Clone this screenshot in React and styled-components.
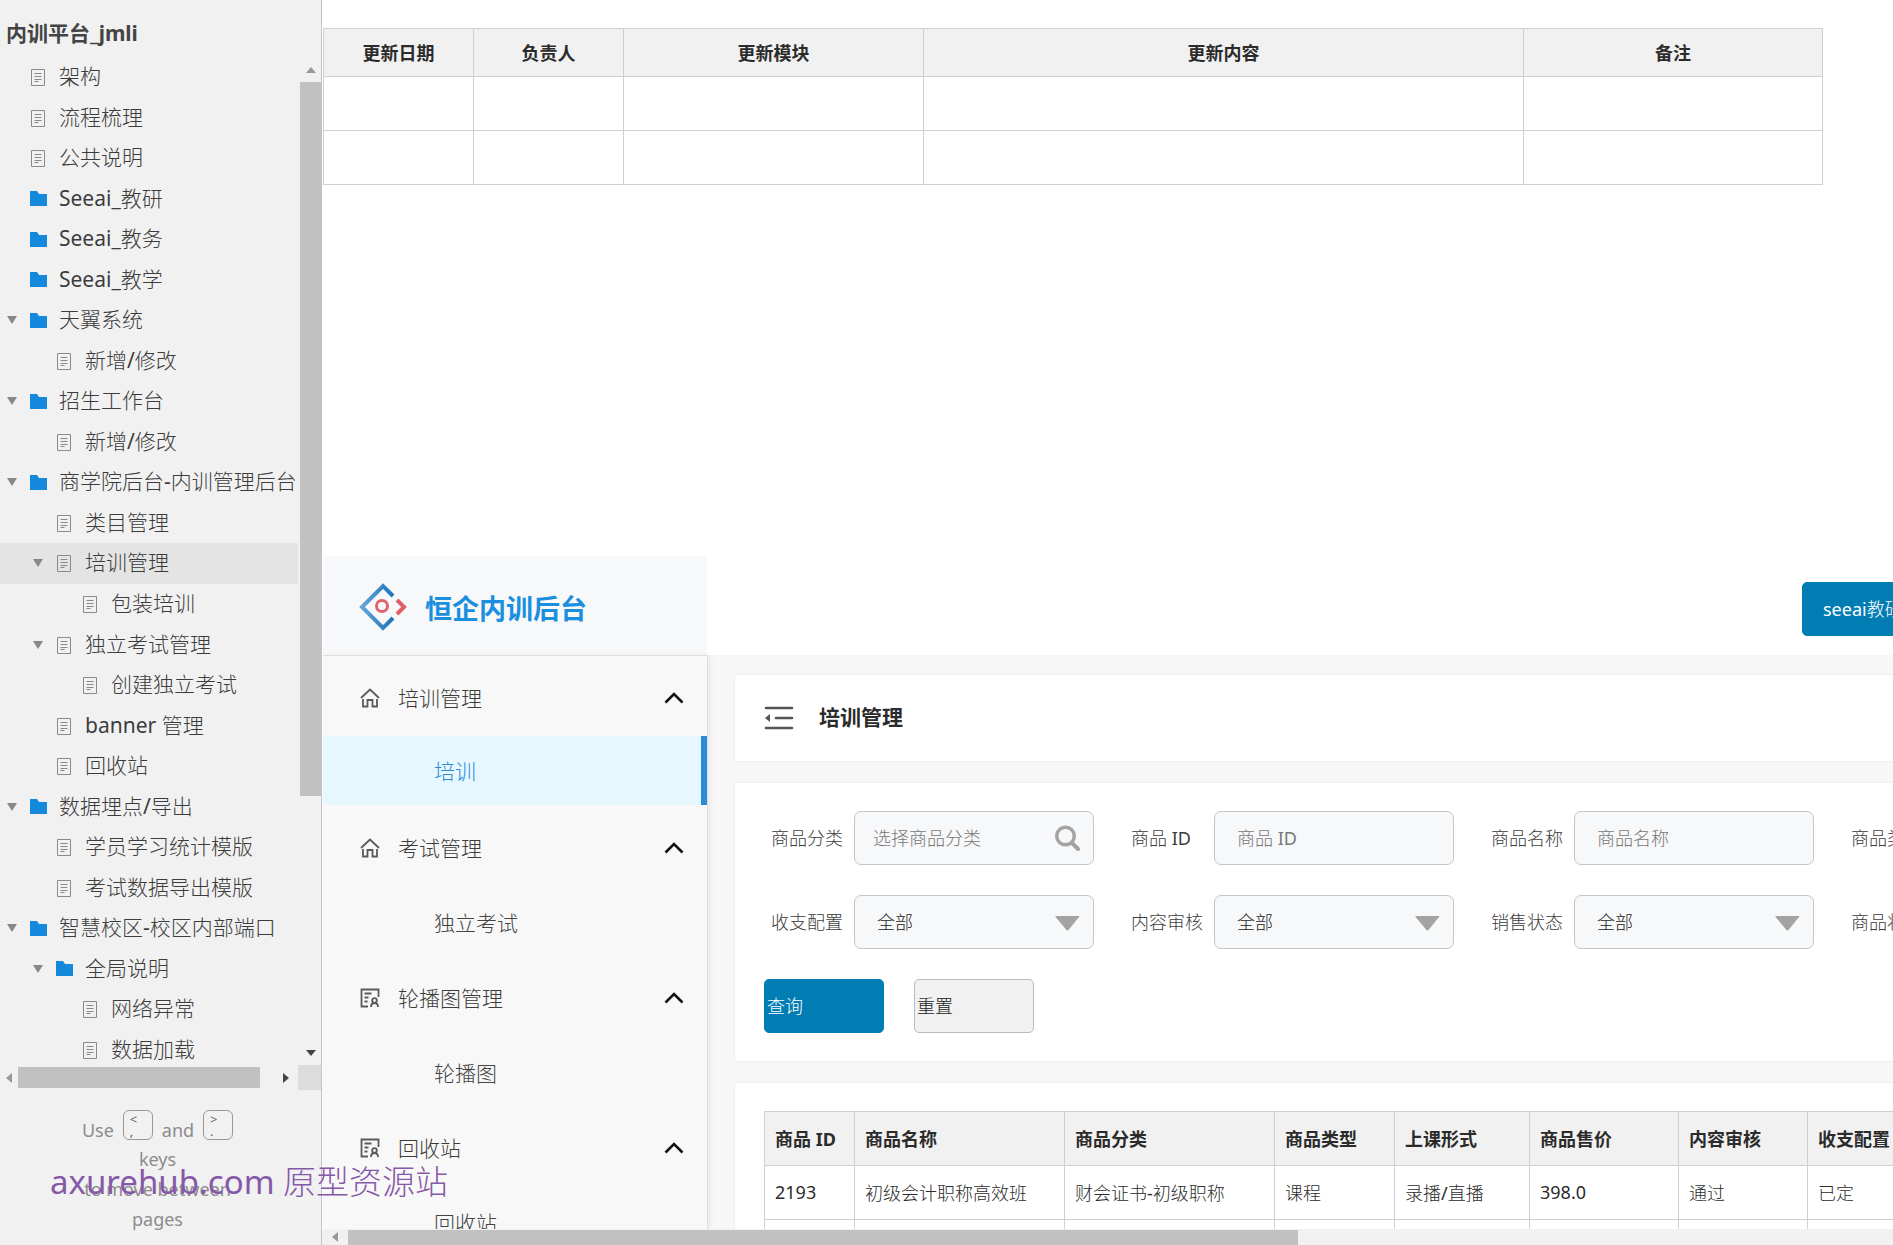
import { useState } from 'react'
import styled, { createGlobalStyle, css } from 'styled-components'

// DATA
const pages = [
  { name: '架构', type: 'page', level: 0 },
  { name: '流程梳理', type: 'page', level: 0 },
  { name: '公共说明', type: 'page', level: 0 },
  { name: 'Seeai_教研', type: 'folder', level: 0 },
  { name: 'Seeai_教务', type: 'folder', level: 0 },
  { name: 'Seeai_教学', type: 'folder', level: 0 },
  { name: '天翼系统', type: 'folder', level: 0, open: true },
  { name: '新增/修改', type: 'page', level: 1 },
  { name: '招生工作台', type: 'folder', level: 0, open: true },
  { name: '新增/修改', type: 'page', level: 1 },
  { name: '商学院后台-内训管理后台', type: 'folder', level: 0, open: true },
  { name: '类目管理', type: 'page', level: 1 },
  { name: '培训管理', type: 'page', level: 1, open: true },
  { name: '包装培训', type: 'page', level: 2 },
  { name: '独立考试管理', type: 'page', level: 1, open: true },
  { name: '创建独立考试', type: 'page', level: 2 },
  { name: 'banner 管理', type: 'page', level: 1 },
  { name: '回收站', type: 'page', level: 1 },
  { name: '数据埋点/导出', type: 'folder', level: 0, open: true },
  { name: '学员学习统计模版', type: 'page', level: 1 },
  { name: '考试数据导出模版', type: 'page', level: 1 },
  { name: '智慧校区-校区内部端口', type: 'folder', level: 0, open: true },
  { name: '全局说明', type: 'folder', level: 1, open: true },
  { name: '网络异常', type: 'page', level: 2 },
  { name: '数据加载', type: 'page', level: 2 },
]

const menu = [
  { name: '培训管理', icon: 'home', child: '培训' },
  { name: '考试管理', icon: 'home', child: '独立考试' },
  { name: '轮播图管理', icon: 'record', child: '轮播图' },
  { name: '回收站', icon: 'record', child: '回收站' },
]

const logColumns = [
  { name: '更新日期', width: 150 },
  { name: '负责人', width: 150 },
  { name: '更新模块', width: 300 },
  { name: '更新内容', width: 600 },
  { name: '备注', width: 299 },
]

const fields = [
  { id: 'category', label: '商品分类', placeholder: '选择商品分类', search: true },
  { id: 'goodsId', label: '商品 ID', placeholder: '商品 ID' },
  { id: 'goodsName', label: '商品名称', placeholder: '商品名称' },
  { id: 'goodsType', label: '商品类型', options: ['全部'] },
  { id: 'budget', label: '收支配置', options: ['全部'] },
  { id: 'audit', label: '内容审核', options: ['全部'] },
  { id: 'sale', label: '销售状态', options: ['全部'] },
  { id: 'state', label: '商品状态', options: ['全部'] },
]

const goodsColumns = [
  { name: '商品 ID', width: 90 },
  { name: '商品名称', width: 210 },
  { name: '商品分类', width: 210 },
  { name: '商品类型', width: 120 },
  { name: '上课形式', width: 135 },
  { name: '商品售价', width: 149 },
  { name: '内容审核', width: 129 },
  { name: '收支配置', width: 129 },
]

const goods = [
  ['2193', '初级会计职称高效班', '财会证书-初级职称', '课程', '录播/直播', '398.0', '通过', '已定'],
  ['', '', '', '', '', '', '', ''],
]

// STYLES
const boldFont = css`
  font-family: 'Noto Sans', 'Noto Sans CJK SC', sans-serif;
  font-weight: 700;
`

const GlobalStyle = createGlobalStyle`
  * {
    box-sizing: border-box;
  }
  body {
    margin: 0;
    background: #fff;
    color: #2b2b2b;
    overflow: hidden;
  }
  body, button, input, select {
    font-family: 'Noto Sans', 'Noto Sans CJK SC Light', 'Noto Sans CJK SC', sans-serif;
    font-weight: 400;
  }
`

const Page = styled.div`
  display: flex;
  height: 100vh;
`

const Sidebar = styled.aside`
  flex: 0 0 322px;
  display: flex;
  flex-direction: column;
  background: #f1f1f1;
  border-right: 1px solid #c4c4c8;
`

const SidebarTitle = styled.h1`
  ${boldFont}
  margin: 0;
  padding: 9px 6px 0;
  height: 57px;
  flex: none;
  font-size: 21px;
  line-height: 48px;
  color: #444;
`

const TreeArea = styled.div`
  flex: 1;
  min-height: 0;
  display: flex;
  overflow: hidden;
`

const Tree = styled.ul`
  flex: 1;
  min-width: 0;
  height: 1013px;
  margin: 0;
  padding: 0;
  display: grid;
  grid-auto-rows: 1fr;
  list-style: none;
  overflow: hidden;
`

const TreeRow = styled.li`
  display: flex;
  align-items: center;
  padding-left: ${props => 7 + props.$level * 26}px;
  background: ${props => (props.$selected ? '#e4e4e4' : 'transparent')};
  cursor: pointer;
`

const TreeToggle = styled.span`
  flex: 0 0 22px;
  display: flex;
`

const TreeIcon = styled.span`
  flex: 0 0 30px;
  display: flex;
  padding-left: ${props => (props.$type === 'folder' ? 1 : 2)}px;
`

const TreeLink = styled.a`
  padding-bottom: 2px;
  color: #3c3c3c;
  font-size: 21px;
  line-height: 32px;
  text-decoration: none;
  white-space: nowrap;
`

const ScrollTrack = styled.div`
  flex: none;
  display: flex;
  align-items: center;
  background: #f1f1f1;
  ${props =>
    props.$vertical
      ? css`
          flex-direction: column;
          width: 23px;
          padding-left: 2px;
        `
      : css`
          height: ${props.$height}px;
        `}
`

const ScrollArrow = styled.span`
  flex: 0 0 ${props => props.$size}px;
  display: flex;
  align-items: center;
  justify-content: center;
`

const ScrollThumb = styled.span`
  flex: 0 0 ${props => props.$length};
  align-self: stretch;
  margin-bottom: auto;
  background: #c1c1c1;
`

const HorizontalThumb = styled.span`
  flex: 0 0 ${props => props.$length};
  height: ${props => props.$height}px;
  margin-right: auto;
  background: #c1c1c1;
`

const ScrollCorner = styled.span`
  flex: 0 0 23px;
  align-self: stretch;
  background: #dcdcdc;
`

const KeyHint = styled.footer`
  flex: 0 0 155px;
  padding: 20px 77px 0 71px;
  font-size: 18px;
  line-height: 30px;
  text-align: center;
  color: #8c8c8c;
`

const KeyLine = styled.div`
  display: flex;
  justify-content: center;
  gap: 9px;
  height: 34px;
  line-height: 40px;
`

const KeyCap = styled.kbd`
  flex: none;
  width: 30px;
  height: 30px;
  border: 1px solid #999;
  border-radius: 6px;
  padding: 2px 6px;
  display: flex;
  flex-direction: column;
  font: 400 13px/12px 'Noto Sans', sans-serif;
  color: #666;
  text-align: left;
`

const Main = styled.main`
  flex: 1;
  min-width: 0;
  display: flex;
  flex-direction: column;
`

const Canvas = styled.div`
  flex: 1;
  min-height: 0;
  overflow: hidden;
  padding: 28px 0 0 1px;
`

const LogTable = styled.table`
  width: 1499px;
  table-layout: fixed;
  border-collapse: collapse;
  font-size: 18px;

  th, td {
    border: 1px solid #d0d0d0;
    padding: 0;
  }
  th {
    ${boldFont}
    height: 48px;
    padding-bottom: 2px;
    background: #f1f1f1;
  }
  td {
    height: 54px;
  }
`

const Prototype = styled.section`
  min-width: 2510px;
  margin-top: 371px;
`

const TopBar = styled.header`
  display: flex;
  height: 99px;
`

const Brand = styled.div`
  ${boldFont}
  flex: 0 0 384px;
  display: flex;
  align-items: center;
  gap: 18px;
  padding: 3px 0 0 36px;
  background: #f7f8f9;
  color: #1a8fe0;
  font-size: 27px;
`

const TopActions = styled.nav`
  display: flex;
  align-items: center;
  padding: 7px 0 0 1095px;
`

const Button = styled.button`
  height: 54px;
  min-width: ${props => props.$width}px;
  padding: 0 ${props => props.$pad}px 2px;
  border: 1px solid ${props => (props.$primary ? '#027db4' : '#bbb')};
  border-radius: 5px;
  background: ${props => (props.$primary ? '#027db4' : '#f1f1f1')};
  color: ${props => (props.$primary ? '#fff' : '#222')};
  font-size: 18px;
  text-align: left;
  white-space: nowrap;
`

const Body = styled.div`
  display: flex;
  background: #f7f7f7;
`

const Menu = styled.nav`
  flex: 0 0 385px;
  padding-top: 4px;
  background: #f8f8f8;
  border-top: 1px solid #ddd;
  border-right: 1px solid #ddd;
  box-shadow: 2px 0 6px rgba(0, 0, 0, 0.06);
`

const MenuHeading = styled.button`
  display: flex;
  align-items: center;
  width: 100%;
  height: 75px;
  padding: 0 23px 0 37px;
  border: 0;
  background: none;
  color: #3c3c3c;
  font-size: 21px;

  span {
    flex: 1;
    padding: 0 0 2px 18px;
    text-align: left;
  }
`

const MenuLink = styled.a`
  display: flex;
  align-items: center;
  height: 75px;
  padding: 0 0 2px 111px;
  color: #444;
  font-size: 21px;
  text-decoration: none;
  ${props =>
    props.$active &&
    css`
      height: 69px;
      margin: 1px 0 5px;
      background: #e6f7ff;
      border-right: 6px solid #2a8bd9;
      color: #2a8bd9;
    `}
`

const Content = styled.div`
  flex: 1;
  min-width: 0;
  padding: 19px 24px 0 26px;
  display: flex;
  flex-direction: column;
  gap: 20px;
`

const Card = styled.section`
  background: #fff;
  border: 1px solid #f0f0f0;
  padding: 28px 29px;
`

const TitleRow = styled.div`
  display: flex;
  align-items: center;
  gap: 25px;
  height: 30px;
`

const CardTitle = styled.h2`
  ${boldFont}
  margin: 0;
  padding-bottom: 4px;
  font-size: 21px;
`

const Filters = styled.form`
  display: flex;
  flex-direction: column;
  gap: 30px;
`

const FieldGrid = styled.div`
  display: grid;
  grid-template-columns: repeat(4, 323px);
  gap: 30px 37px;
  padding-left: 7px;
`

const Field = styled.div`
  display: flex;
  align-items: center;
`

const Label = styled.label`
  flex: 0 0 83px;
  padding-bottom: 2px;
  font-size: 18px;
  color: #3c3c3c;
`

const Control = styled.div`
  position: relative;
  flex: 1;

  > svg {
    position: absolute;
    right: 14px;
    top: 14px;
    pointer-events: none;
  }
`

const controlStyle = css`
  display: block;
  width: 100%;
  height: 54px;
  border: 1px solid #c6c6c6;
  border-radius: 7px;
  background: #f7f8f9;
  color: #222;
  font-size: 18px;
`

const Input = styled.input`
  ${controlStyle}
  padding: 0 ${props => (props.$search ? 18 : 22)}px;

  &::placeholder {
    color: #777;
    opacity: 1;
  }
`

const Select = styled.select`
  ${controlStyle}
  padding: 0 22px;
  appearance: none;
`

const ButtonRow = styled.div`
  display: flex;
  gap: 30px;
`

const GoodsTable = styled.table`
  width: 1172px;
  table-layout: fixed;
  border-collapse: collapse;
  font-size: 18px;

  th, td {
    height: 54px;
    border: 1px solid #d0d0d0;
    padding: 0 10px 2px;
    text-align: left;
    white-space: nowrap;
  }
  th {
    ${boldFont}
    background: #f1f1f1;
  }
`

const Watermark = styled.div`
  position: absolute;
  left: 50px;
  bottom: 39px;
  font-size: 33px;
  line-height: 48px;
  color: #8659a8;
  white-space: nowrap;
  pointer-events: none;
`

// ICONS
const Triangle = ({ direction = 'down', width = 10, height = 8, color = '#888' }) => {
  const points = {
    down: `0,0 ${width},0 ${width / 2},${height}`,
    up: `0,${height} ${width},${height} ${width / 2},0`,
    left: `${width},0 ${width},${height} 0,${height / 2}`,
    right: `0,0 0,${height} ${width},${height / 2}`,
  }
  return (
    <svg width={width} height={height} aria-hidden="true">
      <polygon points={points[direction]} fill={color} />
    </svg>
  )
}

const PageIcon = () => (
  <svg width="14" height="18" fill="none" stroke="#8a8a8a" aria-hidden="true">
    <path d="M.5 1.5h13v16H.5z" />
    <path d="M3.5 5.5h7M3.5 8.5h7M3.5 11.5h7M3.5 13.5h4" />
  </svg>
)

const FolderIcon = () => (
  <svg width="17" height="15" aria-hidden="true">
    <path d="M0 0h7l2 3h8v12H0z" fill="#1489dc" />
  </svg>
)

const LogoIcon = () => (
  <svg width="48" height="48" viewBox="0 0 48 48" fill="none" strokeWidth="4" aria-hidden="true">
    <defs>
      <linearGradient id="edge" x1="0" y1="0" x2="1" y2="0">
        <stop offset="0" stopColor="#62a5d8" />
        <stop offset="1" stopColor="#1f74b8" />
      </linearGradient>
    </defs>
    <path d="M34 13L24 3 3 24l21 21 10-10" stroke="url(#edge)" />
    <circle cx="23" cy="23" r="5.5" stroke="#e0646e" strokeWidth="3" />
    <path d="M38 17l7 7-7 7" stroke="#e0606a" />
  </svg>
)

const HomeIcon = () => (
  <svg width="20" height="20" fill="none" stroke="#5a5a5a" strokeWidth="1.8" aria-hidden="true">
    <path d="M1 10l9-8.500 9 8.500" />
    <path d="M3 11v7.500h4.500V12h5v6.500H17V11" />
  </svg>
)

const RecordIcon = () => (
  <svg width="20" height="20" fill="none" stroke="#5a5a5a" strokeWidth="1.8" aria-hidden="true">
    <path d="M8 18.500H1.500v-17h17V9M4.500 5.500h7M4.500 9.500h4M4.500 13.500h3" />
    <circle cx="14.500" cy="12.500" r="2.300" />
    <path d="M11 19c0-2.500 1.500-4 3.500-4s3.500 1.500 3.500 4" />
  </svg>
)

const ChevronIcon = () => (
  <svg width="20" height="12" fill="none" stroke="#111" strokeWidth="2.600" aria-hidden="true">
    <path d="M1.500 10.500L10 2l8.500 8.500" />
  </svg>
)

const FoldIcon = () => (
  <svg width="30" height="24" stroke="#555" strokeWidth="2.600" strokeLinecap="round" aria-hidden="true">
    <path d="M2 2h26M12 12h16M2 22h26" />
    <path d="M1 12l5-4v8z" fill="#555" stroke="none" />
  </svg>
)

const SearchIcon = () => (
  <svg width="25" height="26" fill="none" stroke="#a3a3a3" aria-hidden="true">
    <circle cx="10.500" cy="11" r="8.800" strokeWidth="3.400" />
    <path d="M17 18l6 6" strokeWidth="4" strokeLinecap="round" />
  </svg>
)

const SelectArrow = () => (
  <svg width="25" height="26" aria-hidden="true">
    <path d="M1 7h23q1 0 0 1L13.500 21q-1 1-2 0L.5 8q-.5-1 .5-1z" fill="#a3a3a3" />
  </svg>
)

// COMPONENTS
const PageTree = () => {
  const [selected, setSelected] = useState(12)

  return (
    <Tree>
      {pages.map((page, i) => (
        <TreeRow
          key={i}
          $level={page.level}
          $selected={i === selected}
          onClick={() => setSelected(i)}
        >
          <TreeToggle>{page.open && <Triangle />}</TreeToggle>
          <TreeIcon $type={page.type}>
            {page.type === 'folder' ? <FolderIcon /> : <PageIcon />}
          </TreeIcon>
          <TreeLink href="#">{page.name}</TreeLink>
        </TreeRow>
      ))}
    </Tree>
  )
}

const FilterField = ({ field }) => (
  <Field>
    <Label htmlFor={field.id}>{field.label}</Label>
    <Control>
      {field.options ? (
        <Select id={field.id}>
          {field.options.map(o => <option key={o}>{o}</option>)}
        </Select>
      ) : (
        <Input id={field.id} placeholder={field.placeholder} $search={field.search} />
      )}
      {field.options && <SelectArrow />}
      {field.search && <SearchIcon />}
    </Control>
  </Field>
)

const SideMenu = () => {
  const [active, setActive] = useState('培训')

  return (
    <Menu>
      {menu.map(item => (
        <div key={item.name}>
          <MenuHeading type="button">
            {item.icon === 'home' ? <HomeIcon /> : <RecordIcon />}
            <span>{item.name}</span>
            <ChevronIcon />
          </MenuHeading>
          <MenuLink
            href="#"
            $active={item.child === active}
            onClick={() => setActive(item.child)}
          >
            {item.child}
          </MenuLink>
        </div>
      ))}
    </Menu>
  )
}

const Columns = ({ columns }) => (
  <colgroup>
    {columns.map(c => <col key={c.name} width={c.width} />)}
  </colgroup>
)

const HeadRow = ({ columns }) => (
  <thead>
    <tr>
      {columns.map(c => <th key={c.name} scope="col">{c.name}</th>)}
    </tr>
  </thead>
)

const App = () => (
  <Page>
    <GlobalStyle />
    <Sidebar>
      <SidebarTitle>内训平台_jmli</SidebarTitle>
      <TreeArea>
        <PageTree />
        <ScrollTrack $vertical>
          <ScrollArrow $size={25}>
            <Triangle direction="up" height={6} color="#999" />
          </ScrollArrow>
          <ScrollThumb $length="714px" />
          <ScrollArrow $size={25}>
            <Triangle height={6} color="#444" />
          </ScrollArrow>
        </ScrollTrack>
      </TreeArea>
      <ScrollTrack $height={25}>
        <ScrollArrow $size={18}>
          <Triangle direction="left" width={6} height={10} color="#999" />
        </ScrollArrow>
        <HorizontalThumb $length="242px" $height={21} />
        <ScrollArrow $size={25}>
          <Triangle direction="right" width={6} height={10} color="#444" />
        </ScrollArrow>
        <ScrollCorner />
      </ScrollTrack>
      <KeyHint>
        <KeyLine>
          Use
          <KeyCap><span>&lt;</span><span>,</span></KeyCap>
          and
          <KeyCap><span>&gt;</span><span>.</span></KeyCap>
        </KeyLine>
        keys
        <br />
        to move between
        <br />
        pages
      </KeyHint>
    </Sidebar>

    <Main>
      <Canvas>
        <LogTable>
          <Columns columns={logColumns} />
          <HeadRow columns={logColumns} />
          <tbody>
            {[1, 2].map(row => (
              <tr key={row}>
                {logColumns.map(c => <td key={c.name} />)}
              </tr>
            ))}
          </tbody>
        </LogTable>

        <Prototype>
          <TopBar>
            <Brand>
              <LogoIcon />
              恒企内训后台
            </Brand>
            <TopActions>
              <Button type="button" $primary $width={150} $pad={20}>seeai教研</Button>
            </TopActions>
          </TopBar>
          <Body>
            <SideMenu />
            <Content>
              <Card>
                <TitleRow>
                  <FoldIcon />
                  <CardTitle>培训管理</CardTitle>
                </TitleRow>
              </Card>
              <Card>
                <Filters onSubmit={e => e.preventDefault()}>
                  <FieldGrid>
                    {fields.map(f => <FilterField key={f.id} field={f} />)}
                  </FieldGrid>
                  <ButtonRow>
                    <Button type="submit" $primary $width={120} $pad={2}>查询</Button>
                    <Button type="reset" $width={120} $pad={2}>重置</Button>
                  </ButtonRow>
                </Filters>
              </Card>
              <Card>
                <GoodsTable>
                  <Columns columns={goodsColumns} />
                  <HeadRow columns={goodsColumns} />
                  <tbody>
                    {goods.map((row, i) => (
                      <tr key={i}>
                        {row.map((cell, j) => <td key={j}>{cell}</td>)}
                      </tr>
                    ))}
                  </tbody>
                </GoodsTable>
              </Card>
            </Content>
          </Body>
        </Prototype>
      </Canvas>
      <ScrollTrack $height={16}>
        <ScrollArrow $size={26}>
          <Triangle direction="left" width={6} height={10} color="#999" />
        </ScrollArrow>
        <HorizontalThumb $length="60.5%" $height={15} />
      </ScrollTrack>
    </Main>

    <Watermark>axurehub.com 原型资源站</Watermark>
  </Page>
)

export default App
